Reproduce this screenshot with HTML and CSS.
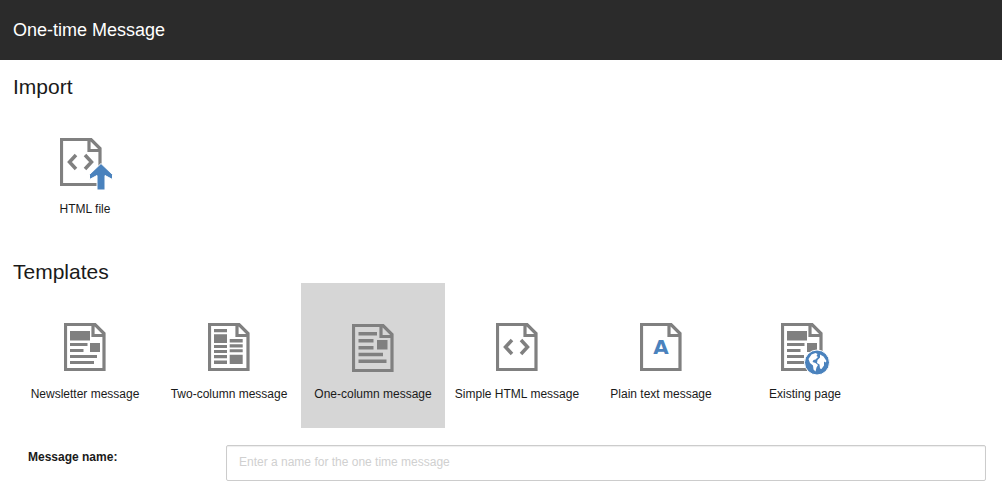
FILE: index.html
```html
<!DOCTYPE html>
<html lang="en">
<head>
  <meta charset="UTF-8">
  <title>One-time Message</title>
  <meta name="viewport" content="width=device-width,initial-scale=1">
  <link rel="stylesheet" href="styles.css">
</head>
<body>
  <svg class="defs" aria-hidden="true">
    <symbol id="page" viewBox="0 0 42 48">
      <path d="M1.5 1.5H31L40 10.500V46.500H1.500ZM29 1.500V12.500H40" fill="none" stroke="#808080" stroke-width="3.2"/>
    </symbol>
  </svg>

  <header class="header">
    <h1>One-time Message</h1>
  </header>

  <main class="content">
    <section>
      <h2>Import</h2>
      <div class="tiles">
        <button type="button" class="tile">
          <svg class="icon upload" viewBox="0 0 50 52">
            <use href="#page" width="42" height="48"/>
            <path class="line" d="M16 17L9.5 24L16 31M25 17L31.5 24L25 31"/>
            <path class="blue" d="M41 25.500L52.500 36.500V41.500L45 37.500V52H37V37.500L29.500 41.500V36.500Z" stroke="#fff"/>
          </svg>
          HTML file
        </button>
      </div>
    </section>

    <section>
      <h2>Templates</h2>
      <div class="tiles">
        <button type="button" class="tile">
          <svg class="icon" viewBox="0 0 42 52">
            <use href="#page" width="42" height="48"/>
            <path d="M6 8h20v9.500H6ZM6 20h17.500v3H6ZM6 26h13.500v3H6ZM6 32h27v3H6ZM6 38h24v3H6ZM26 20h10v9H26Z"/>
          </svg>
          Newsletter message
        </button>
        <button type="button" class="tile">
          <svg class="icon" viewBox="0 0 42 52">
            <use href="#page" width="42" height="48"/>
            <path d="M6 6h13v3.300H6ZM6 11.300h13V20H6ZM6 22h13v3H6ZM6 27h13v3H6ZM6 32h13v3.300H6ZM6 37.500h13V41H6ZM21.700 16h13v3.500h-13ZM21.700 21.300h13v3.300h-13ZM21.700 26.300h13v3h-13ZM21.700 31.700h13V41h-13Z"/>
          </svg>
          Two-column message
        </button>
        <button type="button" class="tile selected">
          <svg class="icon" viewBox="0 -1 42 52">
            <use href="#page" width="42" height="48"/>
            <path d="M6.500 8H25v3.500H6.500ZM6.500 15h15v3.500h-15ZM6.500 22h15v3.500h-15ZM6.500 28.700H31v3.500H6.500ZM6.500 35.500h28V39h-28ZM25 16h10.500v9.500H25Z"/>
          </svg>
          One-column message
        </button>
        <button type="button" class="tile">
          <svg class="icon" viewBox="0 0 42 52">
            <use href="#page" width="42" height="48"/>
            <path class="line" d="M16 17L9.500 24L16 31M25 17L31.500 24L25 31"/>
          </svg>
          Simple HTML message
        </button>
        <button type="button" class="tile">
          <svg class="icon" viewBox="0 0 42 52">
            <use href="#page" width="42" height="48"/>
            <text class="letter" x="21" y="31" text-anchor="middle">A</text>
          </svg>
          Plain text message
        </button>
        <button type="button" class="tile">
          <svg class="icon web" viewBox="0 0 48 52">
            <use href="#page" width="42" height="48"/>
            <path d="M6 8h20v9.500H6ZM6 20h17.500v3H6ZM6 26h13.500v3H6ZM6 32h17v3H6ZM6 38h17v3H6ZM26 20h10v9H26Z"/>
            <circle class="blue" cx="36" cy="39.5" r="12.5" stroke="#fff"/>
            <path d="M27.500 36l3-4.500 4-1.500 2 1-1 2 1.500 1-2.500 2.500-2 .500-1 2 3 1 2.500 2-1.500 2.500-1 4-2-2-.500-4-3-2.500ZM39 31.500l3.500 2 3 4.500-1 1.500-1.500-1v4l-2.500 3.500-1.500-.500-.500-4-2.500-1.500.500-3 2.500-2.500Z" fill="#fff"/>
          </svg>
          Existing page
        </button>
      </div>
    </section>

    <form class="form-row">
      <label for="message-name">Message name:</label>
      <input type="text" id="message-name" placeholder="Enter a name for the one time message">
    </form>
  </main>
</body>
</html>
```
FILE: styles.css
```css
* { box-sizing: border-box; }
body { margin: 0; background: #fff; color: #1a1a1a; font: 12px/16px "Liberation Sans", Arial, sans-serif; }
.defs { display: none; }

.header { background: #2b2b2b; color: #fff; padding: 20px 13px; }
.header h1 { margin: 0; font-size: 18px; line-height: 20px; font-weight: normal; }

.content { padding: 14px 13px; }
h2 { margin: 0; padding-top: 2px; font-size: 21px; line-height: 22px; font-weight: normal; }
section + section { margin-top: 16px; }

.tiles { display: flex; flex-wrap: wrap; }
.tile {
  display: flex;
  flex-direction: column;
  align-items: center;
  gap: 11px;
  width: 144px;
  height: 145px;
  padding: 40px 0 0;
  border: 0;
  background: none;
  color: inherit;
  font: inherit;
  white-space: nowrap;
}
.tile.selected { background: #d6d6d6; }

.icon { width: 42px; height: 52px; fill: #808080; overflow: visible; }
.icon.upload { width: 50px; }
.icon.web { width: 48px; }
.line { fill: none; stroke: #808080; stroke-width: 3.5; }
.blue { fill: #4a82bd; }
.letter { fill: #4a82bd; font: bold 20px "DejaVu Sans", sans-serif; }

.form-row { display: flex; align-items: flex-start; margin-top: 17px; padding: 0 3px 0 15px; }
.form-row label { width: 198px; padding-top: 4px; font-weight: bold; }
.form-row input {
  flex: 1;
  height: 36px;
  padding: 0 12px 2px;
  border: 1px solid #ccc;
  border-radius: 2px;
  box-shadow: inset 0 1px 1px #eee;
  color: inherit;
  font: inherit;
}
.form-row input::placeholder { color: #d0d0d0; }
```
